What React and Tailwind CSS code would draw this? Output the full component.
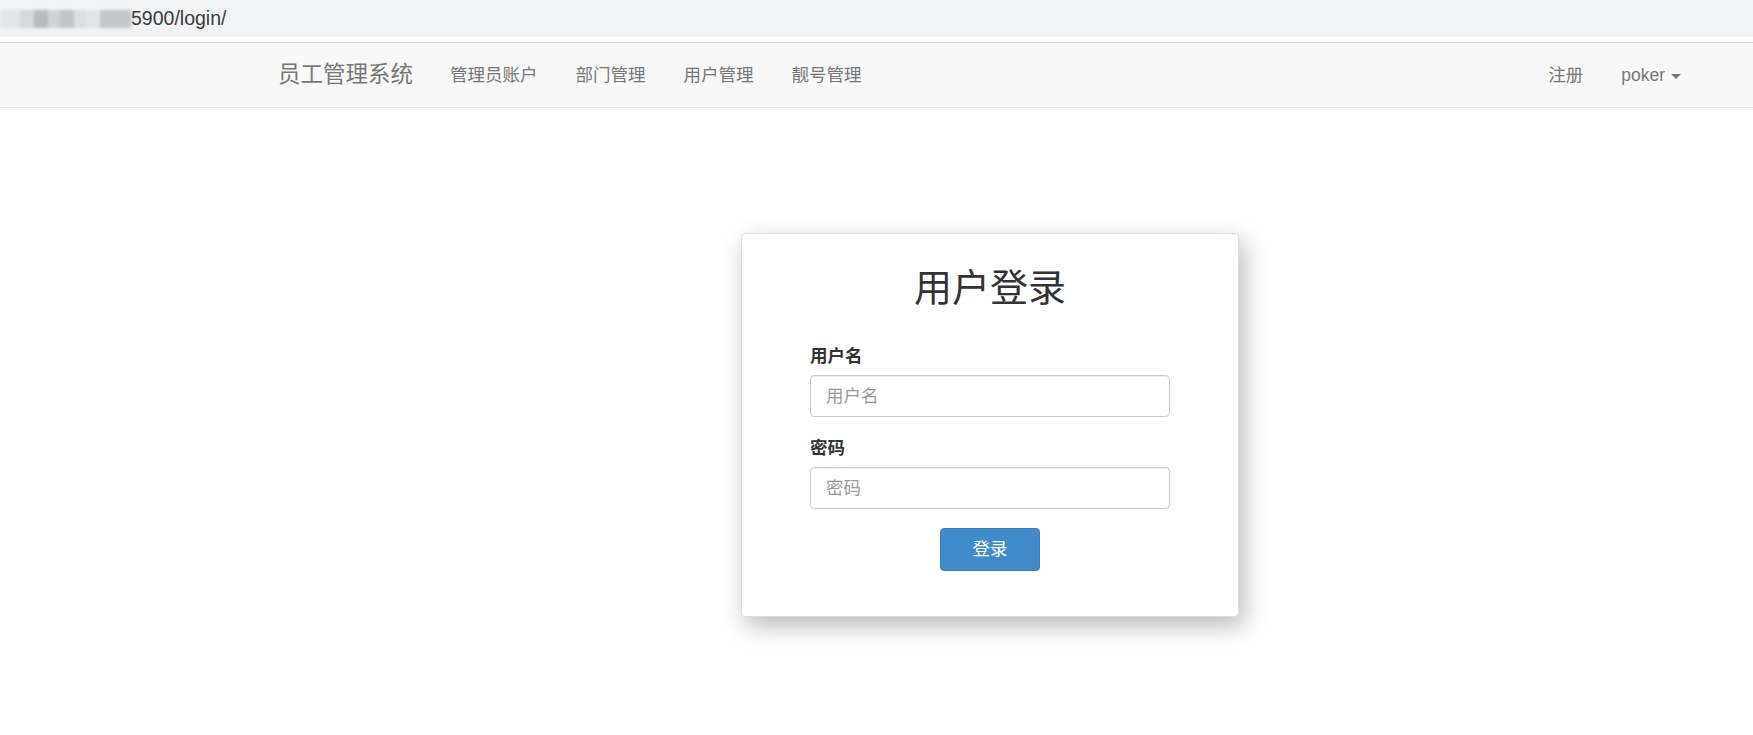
import React from 'react';

const font = { fontFamily: '"Liberation Sans", "Noto Sans CJK SC", sans-serif' };

export default function App() {
    return (
        <div className="min-h-screen bg-white text-[#333]" style={font}>
            {/* ── Address bar ───────────────────────── */}
            <div className="h-[37px] bg-[#f1f3f4] flex items-center">
                <div className="flex items-center h-[24px] w-[131px] blur-[1.5px]">
                    <span className="w-[20px] h-[18px] bg-[#e4e6e8]" />
                    <span className="w-[14px] h-[18px] bg-[#d6d8da]" />
                    <span className="w-[14px] h-[18px] bg-[#b9bbbd]" />
                    <span className="w-[12px] h-[18px] bg-[#d0d2d4]" />
                    <span className="w-[14px] h-[18px] bg-[#c2c4c6]" />
                    <span className="w-[12px] h-[18px] bg-[#dcdee0]" />
                    <span className="w-[14px] h-[18px] bg-[#e2e4e6]" />
                    <span className="w-[31px] h-[18px] bg-[#c4c6c8]" />
                </div>
                <span className="text-[19.5px] text-[#3c3c3c] leading-none">5900/login/</span>
            </div>
            <div className="h-[6px] bg-white border-b border-[#dedede]" />

            {/* ── Navbar ────────────────────────────── */}
            <nav className="h-[65px] bg-[#f8f8f8] border-b border-[#e7e7e7] flex items-center pl-[259px] pr-[53px] text-[#777]">
                <span className="pl-[19px] pr-[18px] text-[22.5px]">员工管理系统</span>
                <a className="px-[19px] text-[17.5px]">管理员账户</a>
                <a className="px-[19px] text-[17.5px]">部门管理</a>
                <a className="px-[19px] text-[17.5px]">用户管理</a>
                <a className="px-[19px] text-[17.5px]">靓号管理</a>
                <div className="flex-1" />
                <a className="px-[19px] text-[17.5px]">注册</a>
                <a className="px-[19px] text-[17.5px] flex items-center">
                    poker
                    <span className="ml-[6px] mt-[2px] w-0 h-0 border-l-[5px] border-r-[5px] border-t-[5px] border-l-transparent border-r-transparent border-t-[#777]" />
                </a>
            </nav>

            {/* ── Login card ────────────────────────── */}
            <div className="pt-[125px] pb-[60px]">
                <div className="ml-[741px] w-[498px] bg-white border border-[#ddd] rounded-[4px] shadow-[5px_9px_24px_rgba(0,0,0,0.28)] pt-[33px] pb-[45px] px-[68px]">
                    <h1 className="text-center text-[38px] leading-[42px] text-[#333]">用户登录</h1>

                    <form className="mt-[35px]">
                        <label className="block text-[17.5px] leading-[25px] font-bold text-[#333] mb-[6px]">用户名</label>
                        <input type="text" placeholder="用户名"
                            className="block w-full h-[42px] px-[15px] text-[17.5px] border border-[#ccc] rounded-[4px] outline-none placeholder-[#999] shadow-[inset_0_1px_1px_rgba(0,0,0,0.075)]" />

                        <label className="block mt-[19px] text-[17.5px] leading-[25px] font-bold text-[#333] mb-[6px]">密码</label>
                        <input type="password" placeholder="密码"
                            className="block w-full h-[42px] px-[15px] text-[17.5px] border border-[#ccc] rounded-[4px] outline-none placeholder-[#999] shadow-[inset_0_1px_1px_rgba(0,0,0,0.075)]" />

                        <div className="flex justify-center mt-[19px]">
                            <button type="button"
                                className="w-[100px] h-[43px] bg-[#428bca] border border-[#357ebd] rounded-[4px] text-white text-[17.5px]">
                                登录
                            </button>
                        </div>
                    </form>
                </div>
            </div>
        </div>
    );
}
